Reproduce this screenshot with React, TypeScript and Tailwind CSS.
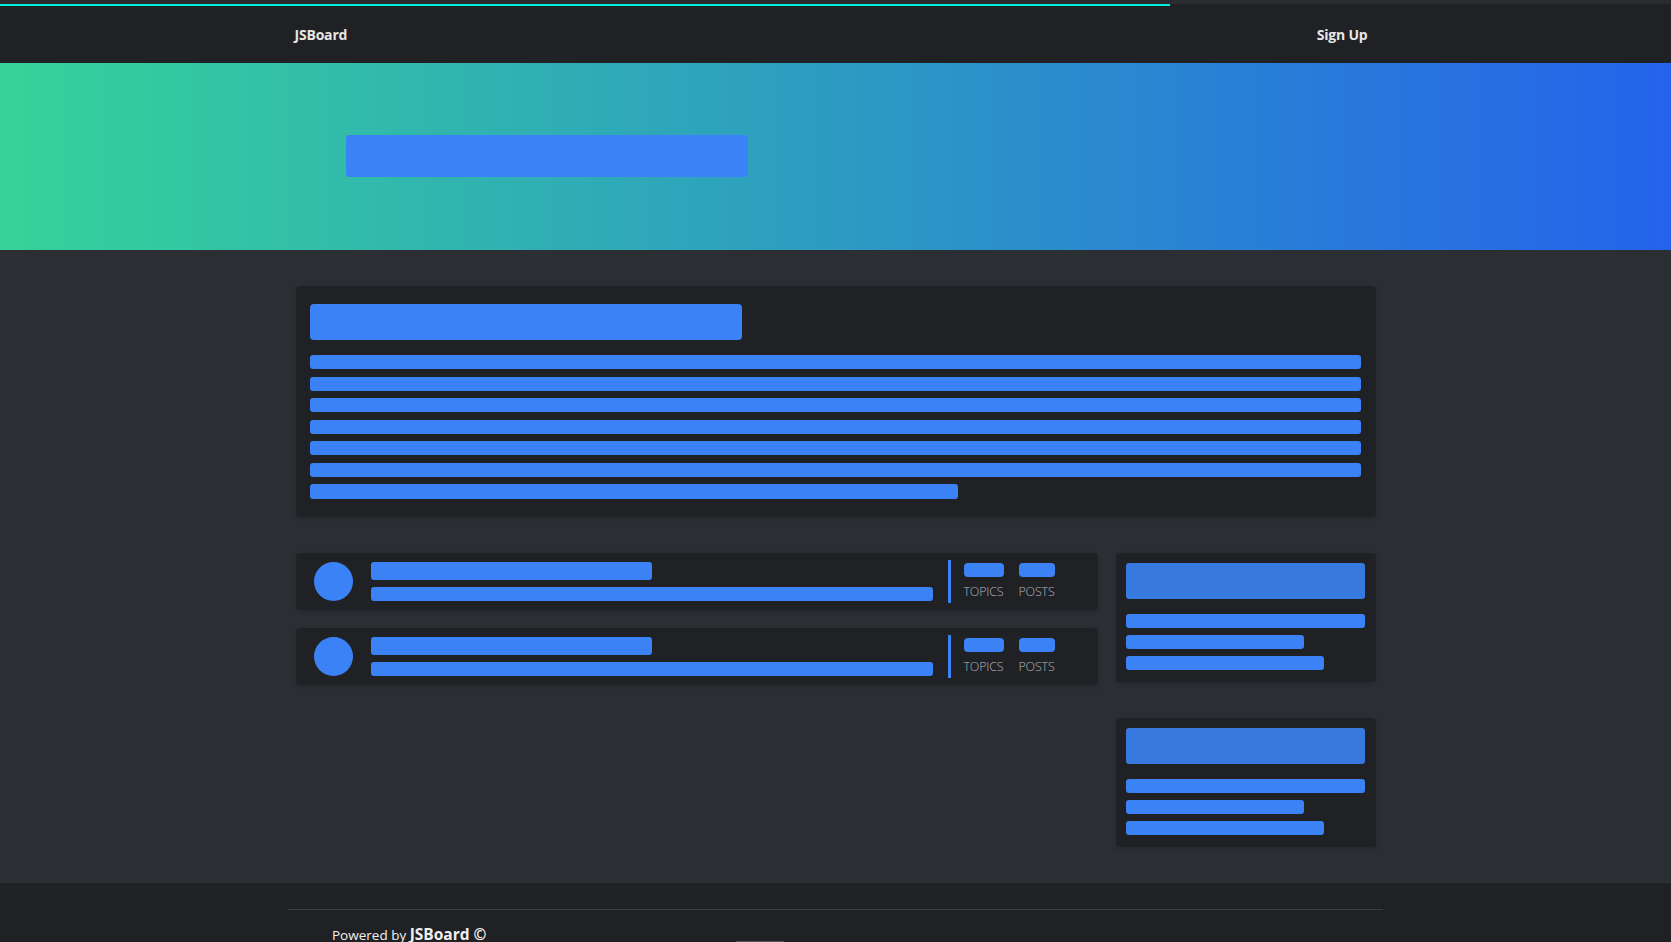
import React from "react";

const Bar = ({ className = "" }: { className?: string }) => (
  <div className={`bg-[#3b82f6] rounded-[3px] ${className}`} />
);

function ForumRow() {
  return (
    <div className="h-[57px] bg-[#202125] rounded-[4px] shadow-[0_2px_4px_rgba(0,0,0,0.15)] flex items-center pl-[18px]">
      <div className="w-[39px] h-[39px] rounded-full bg-[#3b82f6] shrink-0" />
      <div className="ml-[18px] flex flex-col w-[562px]">
        <Bar className="w-[281px] h-[18px]" />
        <Bar className="w-[562px] h-[14px] mt-[7px]" />
      </div>
      <div className="ml-[15px] w-[3px] h-[43px] bg-[#3b82f6]" />
      <div className="ml-[13px] flex gap-[15px]">
        <div className="flex flex-col items-center">
          <Bar className="w-[40px] h-[14px] rounded-[4px]" />
          <span className="mt-[7px] text-[12.5px] leading-[16px] font-light text-[#b0b3b8] tracking-[-0.2px]">TOPICS</span>
        </div>
        <div className="flex flex-col items-center">
          <Bar className="w-[36px] h-[14px] rounded-[4px]" />
          <span className="mt-[7px] text-[12.5px] leading-[16px] font-light text-[#b0b3b8] tracking-[-0.2px]">POSTS</span>
        </div>
      </div>
    </div>
  );
}

function SideCard() {
  return (
    <div className="bg-[#202125] rounded-[4px] shadow-[0_2px_4px_rgba(0,0,0,0.15)] pl-[10px] pr-[11px] pt-[10px] pb-[12px] flex flex-col">
      <div className="h-[36px] bg-[#3879e0] rounded-[3px]" />
      <Bar className="h-[14px] mt-[15px]" />
      <Bar className="h-[14px] w-[178px] mt-[7px]" />
      <Bar className="h-[14px] w-[198px] mt-[7px]" />
    </div>
  );
}

export default function App() {
  return (
    <div className="min-h-screen bg-[#2b2e33] text-white" style={{ fontFamily: '"Open Sans", "Noto Sans", sans-serif' }}>
      <div className="relative">
        <div className="absolute left-0 top-[4px] h-[2px] w-[1170px] bg-[#00f0e0]" />
        <div className="h-[4px] bg-[#2a2b2e]" />
        <nav className="h-[59px] bg-[#202125]">
          <div className="max-w-[1080px] mx-auto h-full flex items-center justify-between pt-[2px] text-[14px] font-bold text-[#e6e6e6]">
            <span className="-ml-[1px] tracking-[-0.2px]">JSBoard</span>
            <span className="mr-[8px] tracking-[-0.2px]">Sign Up</span>
          </div>
        </nav>
      </div>

      <section className="h-[187px] bg-[linear-gradient(to_right,#35d399,#2563eb)]">
        <div className="max-w-[1080px] mx-auto pt-[72px] pl-[50px]">
          <Bar className="w-[402px] h-[42px]" />
        </div>
      </section>

      <main className="max-w-[1080px] mx-auto pt-[36px] pb-[36px]">
        <div className="bg-[#202125] rounded-[4px] shadow-[0_2px_4px_rgba(0,0,0,0.15)] pl-[14px] pr-[15px] pt-[18px] pb-[18px] flex flex-col">
          <Bar className="w-[432px] h-[36px] rounded-[4px]" />
          <div className="mt-[15px] flex flex-col gap-[7.5px]">
            <Bar className="h-[14px]" />
            <Bar className="h-[14px]" />
            <Bar className="h-[14px]" />
            <Bar className="h-[14px]" />
            <Bar className="h-[14px]" />
            <Bar className="h-[14px]" />
            <Bar className="h-[15px] w-[648px]" />
          </div>
        </div>

        <div className="mt-[36px] flex gap-[18px] items-start">
          <div className="w-[802px] flex flex-col gap-[18px]">
            <ForumRow />
            <ForumRow />
          </div>
          <div className="w-[260px] flex flex-col gap-[36px]">
            <SideCard />
            <SideCard />
          </div>
        </div>
      </main>

      <footer className="bg-[#202125] pt-[26px] pb-[40px]">
        <div className="max-w-[1095px] mx-auto border-t border-[#3a3d42]">
          <div className="pl-[44px] pt-[14px] text-[13.5px] leading-[20px] text-[#f0f0f0]">
            Powered by <span className="font-bold text-[15.5px]">JSBoard ©</span>
          </div>
          <div className="-mt-[4px] ml-[448px] w-[48px] h-[20px] bg-[#555]" />
        </div>
      </footer>
    </div>
  );
}
